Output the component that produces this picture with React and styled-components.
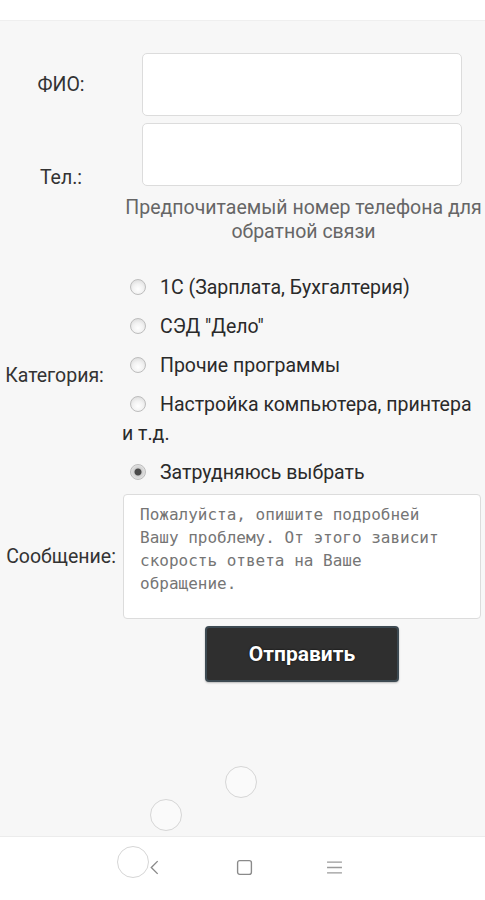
import React from 'react';
import styled, { createGlobalStyle } from 'styled-components';

const categories = [
  { text: '1С (Зарплата, Бухгалтерия)' },
  { text: 'СЭД "Дело"' },
  { text: 'Прочие программы' },
  { text: 'Настройка компьютера, принтера и т.д.' },
  { text: 'Затрудняюсь выбрать', checked: true },
];

const touches = [
  { x: 241, y: 782 },
  { x: 166, y: 815 },
  { x: 133, y: 862 },
];

const App = () => {
  return (
    <Screen>
      <GlobalStyle />
      <StatusStrip />
      <Page>
        <Form onSubmit={(e) => e.preventDefault()}>
          <Label>ФИО:</Label>
          <Field>
            <Input type="text" />
          </Field>

          <Label $offset={-6}>Тел.:</Label>
          <Field>
            <Input type="tel" />
            <Hint>Предпочитаемый номер телефона для обратной связи</Hint>
          </Field>

          <Label $offset={6} $shift={13}>Категория:</Label>
          <RadioList>
            {categories.map(({ text, checked }) => (
              <RadioItem key={text}>
                <Radio type="radio" name="category" defaultChecked={checked} />
                {text}
              </RadioItem>
            ))}
          </RadioList>

          <Label>Сообщение:</Label>
          <TextArea placeholder="Пожалуйста, опишите подробней Вашу проблему. От этого зависит скорость ответа на Ваше обращение." />

          <span />
          <ButtonRow>
            <SubmitButton type="submit">Отправить</SubmitButton>
          </ButtonRow>
        </Form>
      </Page>
      <NavBar>
        <NavIcon viewBox="0 0 16 16">
          <path d="M11 2 L5 8 L11 14" fill="none" stroke="#8a8a8a" strokeWidth="1.3" />
        </NavIcon>
        <NavIcon viewBox="0 0 16 16">
          <rect x="1.5" y="1.5" width="13" height="13" rx="2" fill="none" stroke="#8a8a8a" strokeWidth="1.3" />
        </NavIcon>
        <NavIcon viewBox="0 0 16 16">
          <path d="M1 3 H15 M1 8 H15 M1 13 H15" fill="none" stroke="#9a9a9a" strokeWidth="1.2" />
        </NavIcon>
      </NavBar>
      {touches.map(({ x, y }) => (
        <Touch key={`${x}-${y}`} style={{ left: x - 16, top: y - 16 }} />
      ))}
    </Screen>
  );
};

export default App;

const GlobalStyle = createGlobalStyle`
  * {
    box-sizing: border-box;
  }

  body {
    margin: 0;
    font-family: Roboto, 'Noto Sans', sans-serif;
    background: #ffffff;
  }
`;

const Screen = styled.div`
  position: relative;
  display: flex;
  flex-direction: column;
  height: 900px;
  overflow: hidden;
`;

const StatusStrip = styled.div`
  height: 21px;
  background: #ffffff;
  border-bottom: 1px solid #efefef;
`;

const Page = styled.main`
  flex: 1;
  background: #f7f7f7;
  padding: 32px 3px 0 0;
`;

const Form = styled.form`
  display: grid;
  grid-template-columns: 122px 1fr;
  row-gap: 7px;
  align-items: center;
`;

const Label = styled.div`
  text-align: center;
  font-size: 19.5px;
  color: #333333;
  position: relative;
  top: ${(props) => props.$offset || 0}px;
  padding-right: ${(props) => props.$shift || 0}px;
  white-space: nowrap;
`;

const Field = styled.div`
  display: flex;
  flex-direction: column;
  align-items: center;
`;

const Input = styled.input`
  width: 320px;
  height: 63px;
  border: 1px solid #dcdcdc;
  border-radius: 5px;
  background: #ffffff;
  font-size: 18px;
  padding: 0 10px;
  outline: none;
`;

const Hint = styled.div`
  margin: 10px -3px 0 0;
  width: calc(100% + 3px);
  text-align: center;
  font-size: 19.5px;
  line-height: 24px;
  color: #666666;
`;

const RadioList = styled.div`
  display: flex;
  flex-direction: column;
  gap: 10px;
  padding-top: 22px;
`;

const RadioItem = styled.label`
  display: block;
  font-size: 19.5px;
  line-height: 29px;
  color: #2a2a2a;
`;

const Radio = styled.input`
  appearance: none;
  width: 16px;
  height: 16px;
  margin: 0 14px 0 8px;
  vertical-align: -1px;
  border-radius: 50%;
  border: 1px solid #bdbdbd;
  background: radial-gradient(circle at 50% 65%, #ffffff 0%, #f2f2f2 45%, #d4d4d4 100%);

  &:checked {
    background: radial-gradient(circle, #4a4a4a 0 3px, #cfcfcf 4px, #f4f4f4 100%);
  }
`;

const TextArea = styled.textarea`
  height: 125px;
  margin: 0 1px 0 1px;
  border: 1px solid #dcdcdc;
  border-radius: 4px;
  background: #ffffff;
  padding: 8px 18px 8px 16px;
  font-family: 'DejaVu Sans Mono', 'Liberation Mono', monospace;
  font-size: 16px;
  line-height: 23px;
  resize: none;
  outline: none;

  ::placeholder {
    color: #a8a8a8;
  }
`;

const ButtonRow = styled.div`
  display: flex;
  justify-content: center;
`;

const SubmitButton = styled.button`
  width: 194px;
  height: 56px;
  border: 2px solid #3d4a52;
  border-radius: 4px;
  background: #2f2f2f;
  color: #ffffff;
  font-family: Roboto, 'Noto Sans', sans-serif;
  font-weight: 700;
  font-size: 21px;
  text-shadow: 0 0 2px #000000;
  box-shadow: 0 1px 2px rgba(0, 0, 0, 0.25);
`;

const NavBar = styled.nav`
  height: 64px;
  background: #ffffff;
  border-top: 1px solid #ececec;
  display: flex;
  align-items: center;
  justify-content: center;
  gap: 73px;
  padding: 0 0 2px 3px;
`;

const NavIcon = styled.svg`
  width: 17px;
  height: 17px;
`;

const Touch = styled.div`
  position: absolute;
  width: 32px;
  height: 32px;
  border-radius: 50%;
  border: 1.5px solid #d6d6d6;
  background: rgba(255, 255, 255, 0.35);
`;
